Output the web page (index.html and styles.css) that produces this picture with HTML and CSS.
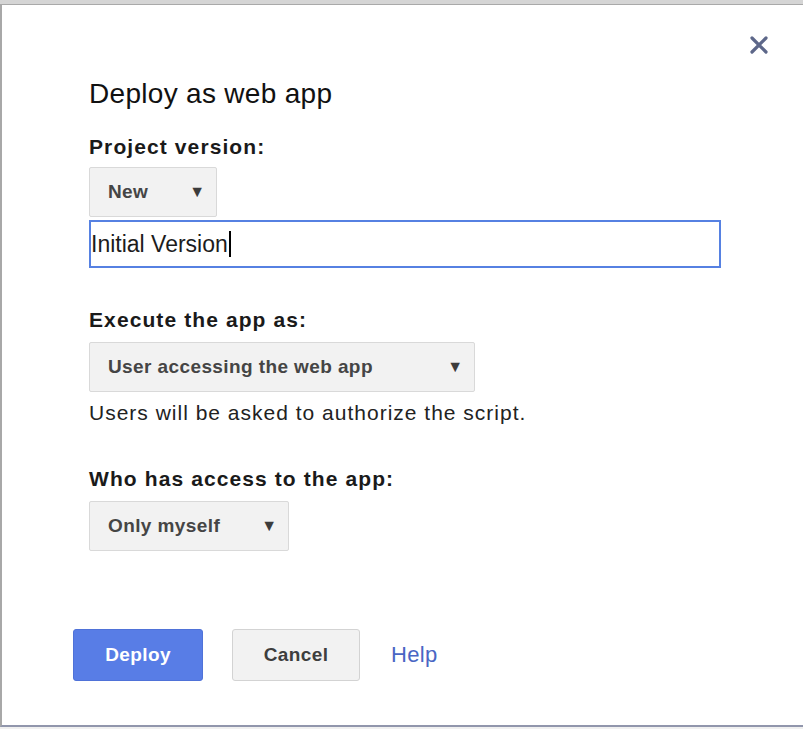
FILE: index.html
```html
<!DOCTYPE html>
<html>
<head>
<meta charset="utf-8">
<link rel="stylesheet" href="styles.css">
</head>
<body>
<div class="topbar"></div>
<div class="dialog">
  <button class="close" aria-label="Close">
    <svg width="18" height="18" viewBox="0 0 18 18"><path d="M2 2 L16 16 M16 2 L2 16" stroke="#5d6789" stroke-width="3.2" stroke-linecap="round"/></svg>
  </button>
  <div class="content">
    <h1 class="title">Deploy as web app</h1>

    <div class="label l-project">Project version:</div>
    <div class="select s-new"><span>New</span><span class="arrow">▼</span></div>
    <div class="input"><span>Initial Version</span><span class="caret"></span></div>

    <div class="label l-exec">Execute the app as:</div>
    <div class="select s-user"><span>User accessing the web app</span><span class="arrow">▼</span></div>
    <div class="note">Users will be asked to authorize the script.</div>

    <div class="label l-who">Who has access to the app:</div>
    <div class="select s-only"><span>Only myself</span><span class="arrow">▼</span></div>
  </div>
  <div class="actions">
    <button class="btn primary">Deploy</button>
    <button class="btn secondary">Cancel</button>
    <a class="help" href="#">Help</a>
  </div>
</div>
<div class="bottom"></div>
</body>
</html>
```

FILE: styles.css
```css
html, body {
  margin: 0;
  padding: 0;
  background: #ffffff;
  font-family: "Liberation Sans", Arial, sans-serif;
}
.topbar {
  height: 4px;
  background: #d5d5d5;
  border-bottom: 1px solid #a9a9a9;
}
.dialog {
  position: relative;
  height: 722px;
  box-sizing: border-box;
  border-left: 2px solid #a8a8a8;
  border-bottom: 2px solid #9196ac;
}
.bottom {
  height: 2px;
  background: #f0f0f0;
}
.close {
  position: absolute;
  top: 29px;
  left: 746px;
  width: 22px;
  height: 22px;
  padding: 2px;
  border: 0;
  background: none;
}
.content {
  padding-left: 87px;
  padding-top: 73px;
  display: flex;
  flex-direction: column;
  align-items: flex-start;
}
.title {
  margin: 0;
  font-weight: normal;
  font-size: 28px;
  line-height: 32px;
  color: #111;
  letter-spacing: 0.3px;
}
.label {
  font-weight: bold;
  font-size: 21px;
  line-height: 24px;
  color: #1a1a1a;
  letter-spacing: 1.1px;
}
.l-project { margin-top: 25px; }
.l-exec { margin-top: 40px; }
.l-who { margin-top: 41px; }
.select {
  box-sizing: border-box;
  height: 50px;
  margin-top: 8px;
  display: flex;
  align-items: center;
  justify-content: space-between;
  padding: 0 11px 0 18px;
  background: #f2f2f2;
  border: 1px solid #d9d9d9;
  border-radius: 2px;
  font-weight: bold;
  font-size: 19px;
  color: #454545;
  letter-spacing: 0.4px;
}
.arrow {
  font-size: 16px;
  color: #3c3c3c;
  letter-spacing: 0;
}
.s-new { width: 128px; }
.s-user { width: 386px; margin-top: 10px; }
.s-only { width: 200px; margin-top: 10px; }
.input {
  box-sizing: border-box;
  width: 632px;
  height: 48px;
  margin-top: 3px;
  border: 2px solid #5681e2;
  display: flex;
  align-items: center;
  padding-left: 0;
  font-size: 23px;
  color: #1c1c1c;
}
.caret {
  display: inline-block;
  width: 2px;
  height: 26px;
  background: #000;
  margin-left: 1px;
}
.note {
  margin-top: 8px;
  font-size: 21px;
  line-height: 26px;
  color: #222;
  letter-spacing: 1px;
}
.actions {
  position: absolute;
  left: 71px;
  top: 624px;
  display: flex;
  align-items: center;
}
.btn {
  box-sizing: border-box;
  height: 52px;
  font-family: "Liberation Sans", Arial, sans-serif;
  font-weight: bold;
  font-size: 19px;
  border-radius: 3px;
  letter-spacing: 0.4px;
}
.primary {
  width: 130px;
  background: #587de6;
  border: 1px solid #4f72d8;
  color: #fff;
}
.secondary {
  width: 128px;
  margin-left: 29px;
  background: #f2f2f2;
  border: 1px solid #d3d3d3;
  color: #3e3e3e;
}
.help {
  margin-left: 31px;
  font-size: 22px;
  color: #4a66c4;
  text-decoration: none;
  letter-spacing: 0.3px;
}
```
